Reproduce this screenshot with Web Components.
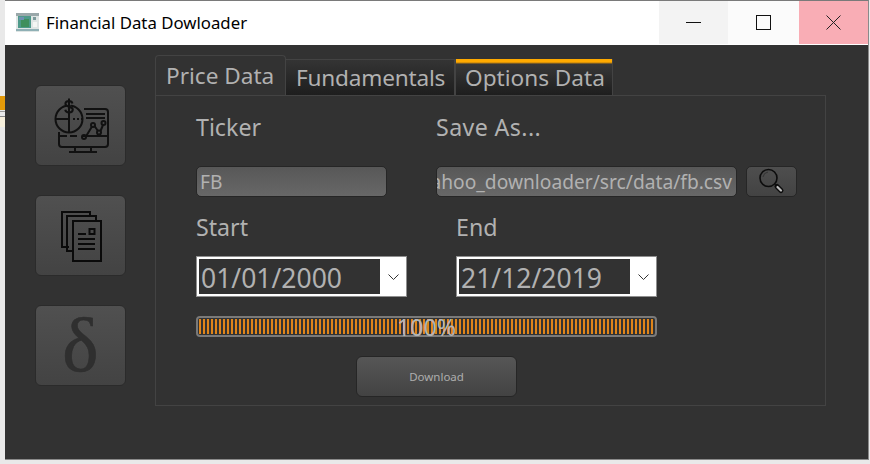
<!DOCTYPE html>
<html>
<head>
<meta charset="utf-8">
<title>Financial Data Dowloader</title>
<style>
    html, body { margin: 0; height: 100%; overflow: hidden; }
    body {
        display: flex;
        background: #e9e9e9;
        font-family: "Noto Sans", "Open Sans", sans-serif;
    }
</style>
</head>
<body>
<fd-desktop-edge></fd-desktop-edge>
<fd-window>
    <fd-titlebar slot="title">Financial Data Dowloader</fd-titlebar>
    <fd-sidebar slot="side">
        <fd-side-button>
            <svg width="60" height="60" viewBox="0 0 60 60" fill="none" stroke="#111" stroke-width="2">
                <path d="M33 13h21a3 3 0 0 1 3 3v32a3 3 0 0 1-3 3H11a3 3 0 0 1-3-3V36"/>
                <path d="M8 40h8M19 40h7M31 40h26" />
                <path d="M24 51v5M40 51v5M18 56h28"/>
                <circle cx="18" cy="23" r="13.5"/>
                <path d="M4.500 23H18M18 9.500V36.500"/>
                <path d="M22 23h2M26 23h2M30 23h2" />
                <path d="M35 18h19M35 22h19"/>
                <path d="M21.500 7.500c-.5-1.800-2-2.500-3.500-2.500-2 0-3.600 1-3.600 2.800 0 3.800 7.400 2 7.400 5.800 0 1.800-1.700 2.900-3.800 2.900-1.800 0-3.400-.9-3.800-2.700M18 2.500v16" fill="#4a4a4a"/>
                <path d="M35.500 39.500 41 30.500M43.500 30l3.500 5M49.500 35l2.500-6"/>
                <circle cx="33" cy="41" r="2"/><circle cx="42" cy="29" r="2"/><circle cx="48" cy="36.500" r="2"/><circle cx="52.500" cy="27" r="2"/>
            </svg>
        </fd-side-button>
        <fd-side-button>
            <svg width="60" height="60" viewBox="0 0 60 60" fill="none" stroke="#0a0a0a" stroke-width="2">
                <path d="M18 41h-7V6h28v4"/>
                <path d="M22 45h-6V10h29v5"/>
                <rect x="22" y="15" width="28" height="40"/>
                <path d="M27 28h8M27 33h17M27 38h17M27 43h17"/>
                <rect x="38.500" y="23" width="5" height="5"/>
            </svg>
        </fd-side-button>
        <fd-side-button><span class="delta">δ</span></fd-side-button>
    </fd-sidebar>
    <fd-tabs slot="main">
        <fd-tab slot="tabs" state="selected">Price Data</fd-tab>
        <fd-tab slot="tabs" style="width:169px;letter-spacing:-.2px">Fundamentals</fd-tab>
        <fd-tab slot="tabs" state="hover" style="width:158px">Options Data</fd-tab>
        <fd-price-form></fd-price-form>
    </fd-tabs>
</fd-window>

<script>
class DesktopEdge extends HTMLElement {
    constructor() {
        super();
        this.attachShadow({mode: 'open'}).innerHTML = `
            <style>
                :host { display: block; flex: 0 0 5px; width: 5px; padding-top: 96px; box-sizing: border-box; }
                .orange { height: 14px; background: #e39a0a; }
                .lines { height: 4px; margin-top: 1px; border-top: 1px solid #999; border-bottom: 1px solid #888; }
                .pale { height: 10px; background: #f6efdc; }
            </style>
            <div class="orange"></div><div class="lines"></div><div class="pale"></div>`;
    }
}

class FdWindow extends HTMLElement {
    constructor() {
        super();
        this.attachShadow({mode: 'open'}).innerHTML = `
            <style>
                :host {
                    display: flex;
                    flex-direction: column;
                    box-sizing: border-box;
                    width: 864px;
                    height: 460px;
                    border-top: 1px solid #7a7a7a;
                    border-right: 1px solid #8a8a8a;
                    border-bottom: 1px solid #8a8a8a;
                    background: #323232;
                }
                main { display: flex; flex: 1; min-height: 0; }
            </style>
            <slot name="title"></slot>
            <main><slot name="side"></slot><slot name="main"></slot></main>`;
    }
}

class Titlebar extends HTMLElement {
    constructor() {
        super();
        this.attachShadow({mode: 'open'}).innerHTML = `
            <style>
                :host {
                    display: flex;
                    height: 44px;
                    background: #fff;
                    color: #000;
                    font: 16.800px "Noto Sans", sans-serif;
                }
                .app { flex: 1; display: flex; align-items: center; padding-left: 11px; gap: 7px; height: 43px; }
                .app svg { filter: blur(.5px); }
                .btn { width: 69px; height: 43px; display: flex; align-items: center; justify-content: center; }
                .min { background: #f3f3f3; }
                .max { background: #fbfbfb; width: 71px; }
                .close { background: #f9adb5; }
            </style>
            <div class="app">
                <svg width="23" height="19" viewBox="0 0 23 19">
                    <rect width="23" height="19" fill="#dfe5e4"/>
                    <rect x="0" y="0" width="23" height="3" fill="#9aa8aa"/>
                    <rect x="0" y="16" width="23" height="2" fill="#8fb0b5"/>
                    <rect x="2" y="3" width="13" height="12" fill="#4e9a8a"/>
                    <rect x="5" y="6" width="8" height="8" fill="#3f8f5c"/>
                    <rect x="3" y="4" width="5" height="3" fill="#6d90b0"/>
                    <rect x="17" y="4" width="3" height="3" fill="#7d9a9c"/>
                    <rect x="17" y="9" width="4" height="5" fill="#f4f6f4"/>
                </svg>
                <span><slot></slot></span>
            </div>
            <div class="btn min"><svg width="15" height="1"><rect width="15" height="1" fill="#111"/></svg></div>
            <div class="btn max"><svg width="15" height="15"><rect x=".5" y=".5" width="14" height="14" fill="none" stroke="#111"/></svg></div>
            <div class="btn close"><svg width="15" height="15" fill="none" stroke="#222"><path d="M.5.5l14 14M14.500.5l-14 14"/></svg></div>`;
    }
}

class Sidebar extends HTMLElement {
    constructor() {
        super();
        this.attachShadow({mode: 'open'}).innerHTML = `
            <style>
                :host { display: flex; flex-direction: column; gap: 29px; margin-left: 30px; padding-top: 40px; }
            </style>
            <slot></slot>`;
    }
}

class SideButton extends HTMLElement {
    constructor() {
        super();
        this.attachShadow({mode: 'open'}).innerHTML = `
            <style>
                :host {
                    display: flex;
                    align-items: center;
                    justify-content: center;
                    box-sizing: border-box;
                    width: 91px;
                    height: 81px;
                    border: 1px solid #2b2b2b;
                    border-radius: 6px;
                    background: linear-gradient(#505050, #434343);
                }
                ::slotted(.delta) {
                    font: 77px/81px "Liberation Serif", serif;
                    color: #2f2f2f;
                    -webkit-text-stroke: .6px #2f2f2f;
                }
            </style>
            <slot></slot>`;
    }
}

class Tabs extends HTMLElement {
    constructor() {
        super();
        this.attachShadow({mode: 'open'}).innerHTML = `
            <style>
                :host { display: block; margin-left: 29px; padding-top: 10px; width: 671px; }
                .bar { display: flex; align-items: flex-end; height: 40px; }
                .pane {
                    box-sizing: border-box;
                    height: 311px;
                    border: 1px solid #434343;
                }
            </style>
            <div class="bar"><slot name="tabs"></slot></div>
            <div class="pane"><slot></slot></div>`;
    }
}

class Tab extends HTMLElement {
    constructor() {
        super();
        this.attachShadow({mode: 'open'}).innerHTML = `
            <style>
                :host {
                    display: flex;
                    align-items: center;
                    box-sizing: border-box;
                    width: 131px;
                    height: 36px;
                    padding: 0 0 0 10px;
                    border: 1px solid #434343;
                    border-left: 0;
                    border-bottom: 0;
                    background: linear-gradient(#343434, #1e1e1e);
                    color: #b1b1b1;
                    font: 22.600px "Noto Sans", sans-serif;
                }
                :host([state="selected"]) {
                    height: 40px;
                    border-left: 1px solid #434343;
                    border-top-left-radius: 4px;
                    border-top-right-radius: 4px;
                    background: #323232;
                }
                :host([state="hover"]) {
                    padding-left: 9px;
                    border-left: 1px solid #434343;
                    border-top: 0;
                    background: linear-gradient(#ffaa00 0, #ffaa00 3px, #b87c10 4px, #383838 5px, #1e1e1e 100%);
                }
            </style>
            <slot></slot>`;
    }
}

class PriceForm extends HTMLElement {
    constructor() {
        super();
        this.attachShadow({mode: 'open'}).innerHTML = `
            <style>
                :host { display: block; padding-left: 40px; color: #b1b1b1; }
                .labels { display: flex; align-items: center; font: 23.2px "Noto Sans", sans-serif; }
                .top { height: 62px; margin-bottom: 8px; }
                .second { height: 59px; }
                .row { display: flex; }
                .progress { margin: 19px 0; }
                .actions { padding-left: 160px; }
            </style>
            <div class="labels top"><span style="width:240px">Ticker</span><span style="letter-spacing:.4px">Save As...</span></div>
            <div class="row">
                <fd-field style="width:191px;margin-right:49px" value="FB"></fd-field>
                <fd-field style="width:301px;margin-right:9px" value="ahoo_downloader/src/data/fb.csv"></fd-field>
                <fd-icon-button></fd-icon-button>
            </div>
            <div class="labels second"><span style="width:260px">Start</span><span>End</span></div>
            <div class="row">
                <fd-date style="width:211px;margin-right:49px" value="01/01/2000"></fd-date>
                <fd-date style="width:201px" value="21/12/2019"></fd-date>
            </div>
            <fd-progress class="progress" value="100"></fd-progress>
            <div class="actions"><fd-push-button>Download</fd-push-button></div>`;
    }
}

class Field extends HTMLElement {
    constructor() {
        super();
        this.attachShadow({mode: 'open'}).innerHTML = `
            <style>
                :host {
                    display: block;
                    box-sizing: border-box;
                    height: 31px;
                    padding: 0 4px 0 3px;
                    border: 1px solid #262626;
                    border-radius: 5px;
                    background: linear-gradient(#585858, #676767);
                    color: #b1b1b1;
                    font: 19.200px/29px "Noto Sans", sans-serif;
                    overflow: hidden;
                    white-space: nowrap;
                }
                .value { display: block; float: right; min-width: 100%; }
            </style>
            <span class="value"></span>`;
        this.shadowRoot.querySelector('.value').textContent = this.getAttribute('value');
    }
}

class IconButton extends HTMLElement {
    constructor() {
        super();
        this.attachShadow({mode: 'open'}).innerHTML = `
            <style>
                :host {
                    display: flex;
                    align-items: center;
                    justify-content: center;
                    box-sizing: border-box;
                    width: 51px;
                    height: 31px;
                    border: 1px solid #262626;
                    border-radius: 5px;
                    background: linear-gradient(#4e4e4e, #434343);
                }
            </style>
            <svg width="27" height="27" viewBox="0 0 27 27" fill="none" stroke="#0c0c0c">
                <circle cx="10.500" cy="10" r="8.500" stroke-width="1.600"/>
                <path d="M5 9a6 6 0 0 1 5-5" stroke-width="1" stroke="#333"/>
                <path d="M17 16.500l2 2" stroke-width="1.600"/>
                <path d="M19 18.500l4 4" stroke="#0c0c0c" stroke-width="5" stroke-linecap="round"/>
                <path d="M19.500 19l3.500 3.500" stroke="#bdbdbd" stroke-width="2.200" stroke-linecap="round"/>
            </svg>`;
    }
}

class DateEdit extends HTMLElement {
    constructor() {
        super();
        this.attachShadow({mode: 'open'}).innerHTML = `
            <style>
                :host {
                    display: flex;
                    box-sizing: border-box;
                    height: 41px;
                    border: 1px solid #8f8f8f;
                    background: #fff;
                    padding: 2px 0;
                }
                .text {
                    flex: 1;
                    height: 35px;
                    margin-left: 2px;
                    padding-left: 2px;
                    background: #323232;
                    color: #b1b1b1;
                    font: 26.500px/39px "Noto Sans", sans-serif;
                    white-space: nowrap;
                }
                .arrow { flex: 0 0 26px; display: flex; align-items: center; justify-content: center; }
            </style>
            <div class="text"></div>
            <div class="arrow">
                <svg width="11" height="6" fill="none" stroke="#333"><path d="M.5.5l5 5 5-5"/></svg>
            </div>`;
        this.shadowRoot.querySelector('.text').textContent = this.getAttribute('value');
    }
}

class Progress extends HTMLElement {
    constructor() {
        super();
        this.attachShadow({mode: 'open'}).innerHTML = `
            <style>
                :host {
                    display: block;
                    box-sizing: border-box;
                    width: 461px;
                    height: 21px;
                    border: 2px solid #7a7a7a;
                    border-radius: 4px;
                    padding: 1px;
                }
                .track {
                    display: flex;
                    justify-content: center;
                    height: 100%;
                    background: repeating-linear-gradient(90deg, #e0851a 0 2px, #333 2px 4px);
                }
                .label {
                    color: #b4b4b4;
                    font: 23.2px/17px "Noto Sans", sans-serif;
                    white-space: nowrap;
                }
            </style>
            <div class="track"><span class="label"></span></div>`;
        this.shadowRoot.querySelector('.label').textContent = this.getAttribute('value') + '%';
    }
}

class PushButton extends HTMLElement {
    constructor() {
        super();
        this.attachShadow({mode: 'open'}).innerHTML = `
            <style>
                :host {
                    display: flex;
                    align-items: center;
                    justify-content: center;
                    box-sizing: border-box;
                    width: 161px;
                    height: 41px;
                    border: 1px solid #262626;
                    border-radius: 6px;
                    background: linear-gradient(#565656, #434343);
                    color: #adadad;
                    font: 11.500px "Noto Sans", sans-serif;
                }
            </style>
            <slot></slot>`;
    }
}

customElements.define('fd-desktop-edge', DesktopEdge);
customElements.define('fd-window', FdWindow);
customElements.define('fd-titlebar', Titlebar);
customElements.define('fd-sidebar', Sidebar);
customElements.define('fd-side-button', SideButton);
customElements.define('fd-tabs', Tabs);
customElements.define('fd-tab', Tab);
customElements.define('fd-price-form', PriceForm);
customElements.define('fd-field', Field);
customElements.define('fd-icon-button', IconButton);
customElements.define('fd-date', DateEdit);
customElements.define('fd-progress', Progress);
customElements.define('fd-push-button', PushButton);
</script>
</body>
</html>
